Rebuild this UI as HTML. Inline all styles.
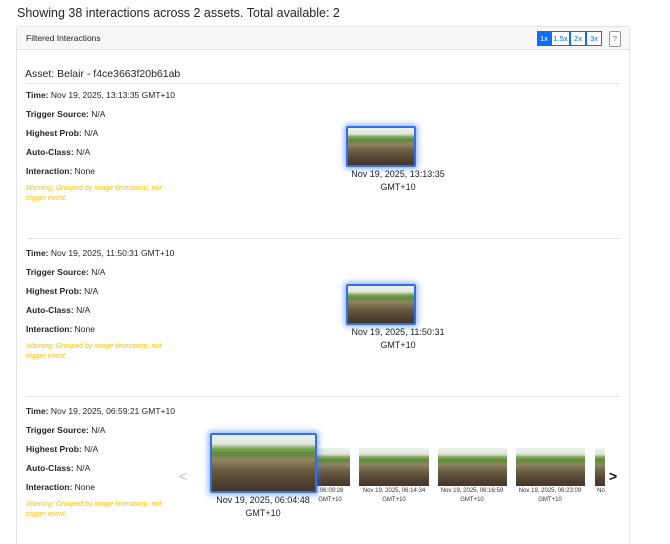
<!DOCTYPE html>
<html style="width:670px;height:544px;overflow:hidden"><head><style>
*{margin:0;padding:0;box-sizing:border-box}
body{width:670px;height:544px;background:#fff;font-family:"Liberation Sans",sans-serif;color:#212529;position:relative;overflow:hidden}
.a{position:absolute;white-space:nowrap}
.f{font-size:8.5px}
b{font-weight:bold}
.w{font-size:7px;color:#ffc107;font-style:italic;line-height:10px;white-space:normal;width:150px}
.hr{position:absolute;left:26px;width:594px;height:1px;background:#e6e6e6}
.ph{position:absolute;background:linear-gradient(180deg,#eef1ec 0%,#dfe6dc 16%,#7fa955 24%,#5f8a3e 32%,#8f8660 44%,#6f6146 60%,#554735 80%,#423628 100%);}
.sel{border:2px solid #2f6ff0;box-shadow:0 0 6px 2px rgba(47,111,240,.5);border-radius:2px}
.cap{position:absolute;text-align:center;font-size:9px;line-height:13px;color:#212529}
.sc{position:absolute;text-align:center;font-size:6px;line-height:9px;color:#333}
.btn{position:absolute;top:31px;height:15px;font-size:7.5px;line-height:13px;text-align:center;border:1px solid #0d6efd;color:#0d6efd;background:#fff}
</style></head><body>
<div class="a" style="left:17px;top:6px;font-size:12.5px">Showing 38 interactions across 2 assets. Total available: 2</div>
<div class="a" style="left:16px;top:26px;width:614px;height:530px;border:1px solid #e3e3e3;border-bottom:none;border-radius:3px 3px 0 0"></div>
<div class="a" style="left:17px;top:27px;width:612px;height:23px;background:#f7f7f7;border-bottom:1px solid #e3e3e3"></div>
<div class="a" style="left:26px;top:33px;font-size:8.5px">Filtered Interactions</div>
<div class="btn" style="left:537px;width:14px;background:#0d6efd;color:#fff">1x</div>
<div class="btn" style="left:551px;width:19px">1.5x</div>
<div class="btn" style="left:570px;width:16px">2x</div>
<div class="btn" style="left:586px;width:16px">3x</div>
<div class="btn" style="left:609px;width:12px;height:16px;border-color:#999;color:#666;border-radius:2px">?</div>
<div class="a" style="left:25px;top:68px;font-size:10.5px">Asset: Belair - f4ce3663f20b61ab</div>
<div class="hr" style="top:83px"></div>

<div class="a f" style="left:26px;top:90px"><b>Time:</b> Nov 19, 2025, 13:13:35 GMT+10</div>
<div class="a f" style="left:26px;top:109px"><b>Trigger Source:</b> N/A</div>
<div class="a f" style="left:26px;top:128px"><b>Highest Prob:</b> N/A</div>
<div class="a f" style="left:26px;top:147px"><b>Auto-Class:</b> N/A</div>
<div class="a f" style="left:26px;top:166px"><b>Interaction:</b> None</div>
<div class="a w" style="left:26px;top:184px">Warning: Grouped by image timestamp, not trigger event.</div>
<div class="ph sel" style="left:346px;top:126px;width:70px;height:41px"></div>
<div class="cap" style="left:338px;top:168px;width:120px">Nov 19, 2025, 13:13:35<br>GMT+10</div>
<div class="hr" style="top:238px"></div>

<div class="a f" style="left:26px;top:248px"><b>Time:</b> Nov 19, 2025, 11:50:31 GMT+10</div>
<div class="a f" style="left:26px;top:267px"><b>Trigger Source:</b> N/A</div>
<div class="a f" style="left:26px;top:286px"><b>Highest Prob:</b> N/A</div>
<div class="a f" style="left:26px;top:305px"><b>Auto-Class:</b> N/A</div>
<div class="a f" style="left:26px;top:324px"><b>Interaction:</b> None</div>
<div class="a w" style="left:26px;top:342px">Warning: Grouped by image timestamp, not trigger event.</div>
<div class="ph sel" style="left:346px;top:284px;width:70px;height:41px"></div>
<div class="cap" style="left:338px;top:326px;width:120px">Nov 19, 2025, 11:50:31<br>GMT+10</div>
<div class="hr" style="top:396px"></div>

<div class="a f" style="left:26px;top:406px"><b>Time:</b> Nov 19, 2025, 06:59:21 GMT+10</div>
<div class="a f" style="left:26px;top:425px"><b>Trigger Source:</b> N/A</div>
<div class="a f" style="left:26px;top:444px"><b>Highest Prob:</b> N/A</div>
<div class="a f" style="left:26px;top:463px"><b>Auto-Class:</b> N/A</div>
<div class="a f" style="left:26px;top:482px"><b>Interaction:</b> None</div>
<div class="a w" style="left:26px;top:500px">Warning: Grouped by image timestamp, not trigger event.</div>

<div class="a" style="left:179px;top:468px;font-size:14px;color:#bbb">&lt;</div>
<div class="ph" style="left:313px;top:448px;width:37px;height:38px"></div>
<div class="sc" style="left:300px;top:487px;width:60px">, 06:09:28<br>GMT+10</div>
<div class="ph" style="left:359px;top:448px;width:70px;height:38px"></div>
<div class="sc" style="left:354px;top:487px;width:80px">Nov 19, 2025, 06:14:34<br>GMT+10</div>
<div class="ph" style="left:438px;top:448px;width:69px;height:38px"></div>
<div class="sc" style="left:432px;top:487px;width:80px">Nov 19, 2025, 06:16:59<br>GMT+10</div>
<div class="ph" style="left:516px;top:448px;width:69px;height:38px"></div>
<div class="sc" style="left:510px;top:487px;width:80px">Nov 19, 2025, 06:23:09<br>GMT+10</div>
<div class="ph" style="left:595px;top:448px;width:10px;height:38px"></div>
<div class="sc" style="left:596px;top:487px;width:10px;overflow:hidden">No</div>
<div class="a" style="left:609px;top:468px;font-size:14px;font-weight:bold;color:#111">&gt;</div>
<div class="ph sel" style="left:210px;top:433px;width:107px;height:60px"></div>
<div class="cap" style="left:203px;top:494px;width:120px">Nov 19, 2025, 06:04:48<br>GMT+10</div>
</body></html>
